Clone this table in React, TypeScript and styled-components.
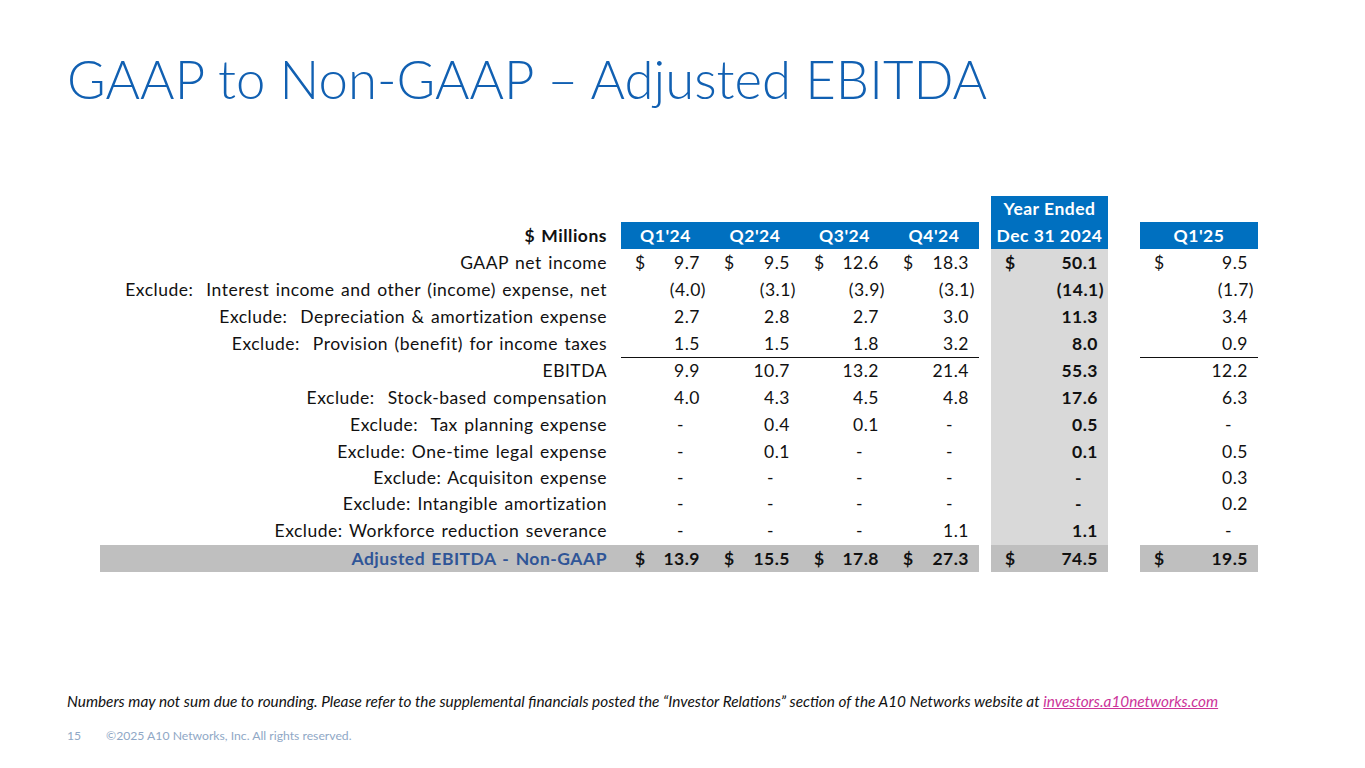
import React from 'react';
import styled, { createGlobalStyle } from 'styled-components';

const GlobalStyle = createGlobalStyle`
  html, body {
    margin: 0;
    padding: 0;
    background: #ffffff;
  }
  body {
    font-family: Lato, 'Liberation Sans', sans-serif;
    color: #111111;
  }
`;

const Slide = styled.main`
  width: 1365px;
  height: 768px;
  box-sizing: border-box;
  padding: 53px 0 0 67px;
  display: flex;
  flex-direction: column;
  overflow: hidden;
`;

const Title = styled.h1`
  margin: 0;
  font-family: Lato, 'Liberation Sans', sans-serif;
  font-weight: 300;
  font-size: 52.7px;
  line-height: 52px;
  color: #1160b2;
  white-space: nowrap;
`;

const TableWrap = styled.div`
  margin: 91px 0 0 33px;
`;

const Table = styled.table`
  border-collapse: collapse;
  table-layout: fixed;
  width: 1158px;
  font-size: 17.5px;
  letter-spacing: 0.5px;
  line-height: 1;
`;

const Row = styled.tr<{ $h: number }>`
  height: ${(p) => p.$h}px;
`;

const LabelCell = styled.td<{ $bold?: boolean; $total?: boolean }>`
  padding: 0 14px 0 0;
  text-align: right;
  white-space: pre;
  word-spacing: 1.5px;
  font-weight: ${(p) => (p.$bold || p.$total ? 700 : 400)};
  color: ${(p) => (p.$total ? '#2f5597' : '#111111')};
  background: ${(p) => (p.$total ? '#bfbfbf' : 'transparent')};
`;

const HeadCell = styled.td<{ $blue?: boolean }>`
  padding: 0;
  text-align: center;
  font-weight: 700;
  color: #ffffff;
  background: ${(p) => (p.$blue ? '#0070c0' : 'transparent')};
`;

const Spacer = styled.td`
  padding: 0;
`;

const ValueCell = styled.td<{ $bg?: string; $line?: boolean; $bold?: boolean }>`
  padding: 0 4px 0 14px;
  background: ${(p) => p.$bg ?? 'transparent'};
  border-bottom: ${(p) => (p.$line ? '1px solid #111111' : '0')};
  font-weight: ${(p) => (p.$bold ? 700 : 400)};
`;

const Money = styled.div`
  display: flex;
  justify-content: space-between;
  align-items: center;
  white-space: nowrap;
`;

const Num = styled.span<{ $pad: number }>`
  padding-right: ${(p) => p.$pad}px;
`;

const Note = styled.p`
  margin: 121px 0 0;
  font-style: italic;
  font-size: 15.35px;
  line-height: 16px;
  color: #111111;
  white-space: nowrap;
`;

const NoteLink = styled.a`
  color: #cc3399;
  text-decoration: underline;
`;

const Footer = styled.footer`
  display: flex;
  margin-top: 20px;
  font-size: 12.2px;
  line-height: 14px;
  color: #8fa8c6;
`;

const PageNum = styled.span`
  width: 39px;
`;

type DataRow = {
  label: string;
  q: string[];
  year: string;
  q125: string;
  dollar?: boolean;
  line?: boolean;
  h?: number;
};

const rows: DataRow[] = [
  { label: 'GAAP net income', q: ['9.7', '9.5', '12.6', '18.3'], year: '50.1', q125: '9.5', dollar: true },
  { label: 'Exclude:  Interest income and other (income) expense, net', q: ['(4.0)', '(3.1)', '(3.9)', '(3.1)'], year: '(14.1)', q125: '(1.7)' },
  { label: 'Exclude:  Depreciation & amortization expense', q: ['2.7', '2.8', '2.7', '3.0'], year: '11.3', q125: '3.4' },
  { label: 'Exclude:  Provision (benefit) for income taxes', q: ['1.5', '1.5', '1.8', '3.2'], year: '8.0', q125: '0.9', line: true },
  { label: 'EBITDA', q: ['9.9', '10.7', '13.2', '21.4'], year: '55.3', q125: '12.2' },
  { label: 'Exclude:  Stock-based compensation', q: ['4.0', '4.3', '4.5', '4.8'], year: '17.6', q125: '6.3' },
  { label: 'Exclude:  Tax planning expense', q: ['-', '0.4', '0.1', '-'], year: '0.5', q125: '-' },
  { label: 'Exclude: One-time legal expense', q: ['-', '0.1', '-', '-'], year: '0.1', q125: '0.5' },
  { label: 'Exclude: Acquisiton expense', q: ['-', '-', '-', '-'], year: '-', q125: '0.3', h: 26 },
  { label: 'Exclude: Intangible amortization', q: ['-', '-', '-', '-'], year: '-', q125: '0.2', h: 26 },
  { label: 'Exclude: Workforce reduction severance', q: ['-', '-', '-', '1.1'], year: '1.1', q125: '-', h: 28 },
];

const total: DataRow = {
  label: 'Adjusted EBITDA - Non-GAAP',
  q: ['13.9', '15.5', '17.8', '27.3'],
  year: '74.5',
  q125: '19.5',
  dollar: true,
};

// accounting format: room for ")" on positives, two digit widths after a dash
const padFor = (v: string) => (v.startsWith('(') ? 0 : v === '-' ? 22 : 6);

function Amount({ value, dollar }: { value: string; dollar?: boolean }) {
  return (
    <Money>
      <span>{dollar ? '$' : ''}</span>
      <Num $pad={padFor(value)}>{value}</Num>
    </Money>
  );
}

const GRAY = '#d9d9d9';
const DARK = '#bfbfbf';

function App() {
  return (
    <>
      <GlobalStyle />
      <Slide>
        <Title>GAAP to Non-GAAP – Adjusted EBITDA</Title>

        <TableWrap>
          <Table>
            <colgroup>
              <col style={{ width: 521 }} />
              <col style={{ width: 89 }} />
              <col style={{ width: 90 }} />
              <col style={{ width: 89 }} />
              <col style={{ width: 90 }} />
              <col style={{ width: 12 }} />
              <col style={{ width: 117 }} />
              <col style={{ width: 32 }} />
              <col style={{ width: 118 }} />
            </colgroup>
            <tbody>
              <Row $h={26}>
                <LabelCell />
                <HeadCell />
                <HeadCell />
                <HeadCell />
                <HeadCell />
                <Spacer />
                <HeadCell $blue>Year Ended</HeadCell>
                <Spacer />
                <HeadCell />
              </Row>
              <Row $h={27}>
                <LabelCell $bold>$ Millions</LabelCell>
                <HeadCell $blue>Q1'24</HeadCell>
                <HeadCell $blue>Q2'24</HeadCell>
                <HeadCell $blue>Q3'24</HeadCell>
                <HeadCell $blue>Q4'24</HeadCell>
                <Spacer />
                <HeadCell $blue>Dec 31 2024</HeadCell>
                <Spacer />
                <HeadCell $blue>Q1'25</HeadCell>
              </Row>

              {rows.map((r) => (
                <Row key={r.label} $h={r.h ?? 27}>
                  <LabelCell>{r.label}</LabelCell>
                  {r.q.map((v, i) => (
                    <ValueCell key={i} $line={r.line}>
                      <Amount value={v} dollar={r.dollar} />
                    </ValueCell>
                  ))}
                  <Spacer />
                  <ValueCell $bg={GRAY} $bold>
                    <Amount value={r.year} dollar={r.dollar} />
                  </ValueCell>
                  <Spacer />
                  <ValueCell $line={r.line}>
                    <Amount value={r.q125} dollar={r.dollar} />
                  </ValueCell>
                </Row>
              ))}

              <Row $h={27}>
                <LabelCell $total>{total.label}</LabelCell>
                {total.q.map((v, i) => (
                  <ValueCell key={i} $bg={DARK} $bold>
                    <Amount value={v} dollar />
                  </ValueCell>
                ))}
                <Spacer />
                <ValueCell $bg={DARK} $bold>
                  <Amount value={total.year} dollar />
                </ValueCell>
                <Spacer />
                <ValueCell $bg={DARK} $bold>
                  <Amount value={total.q125} dollar />
                </ValueCell>
              </Row>
            </tbody>
          </Table>
        </TableWrap>

        <Note>
          Numbers may not sum due to rounding. Please refer to the supplemental financials posted the “Investor
          Relations” section of the A10 Networks website at{' '}
          <NoteLink href="#">investors.a10networks.com</NoteLink>
        </Note>

        <Footer>
          <PageNum>15</PageNum>
          <span>©2025 A10 Networks, Inc. All rights reserved.</span>
        </Footer>
      </Slide>
    </>
  );
}

export default App;
